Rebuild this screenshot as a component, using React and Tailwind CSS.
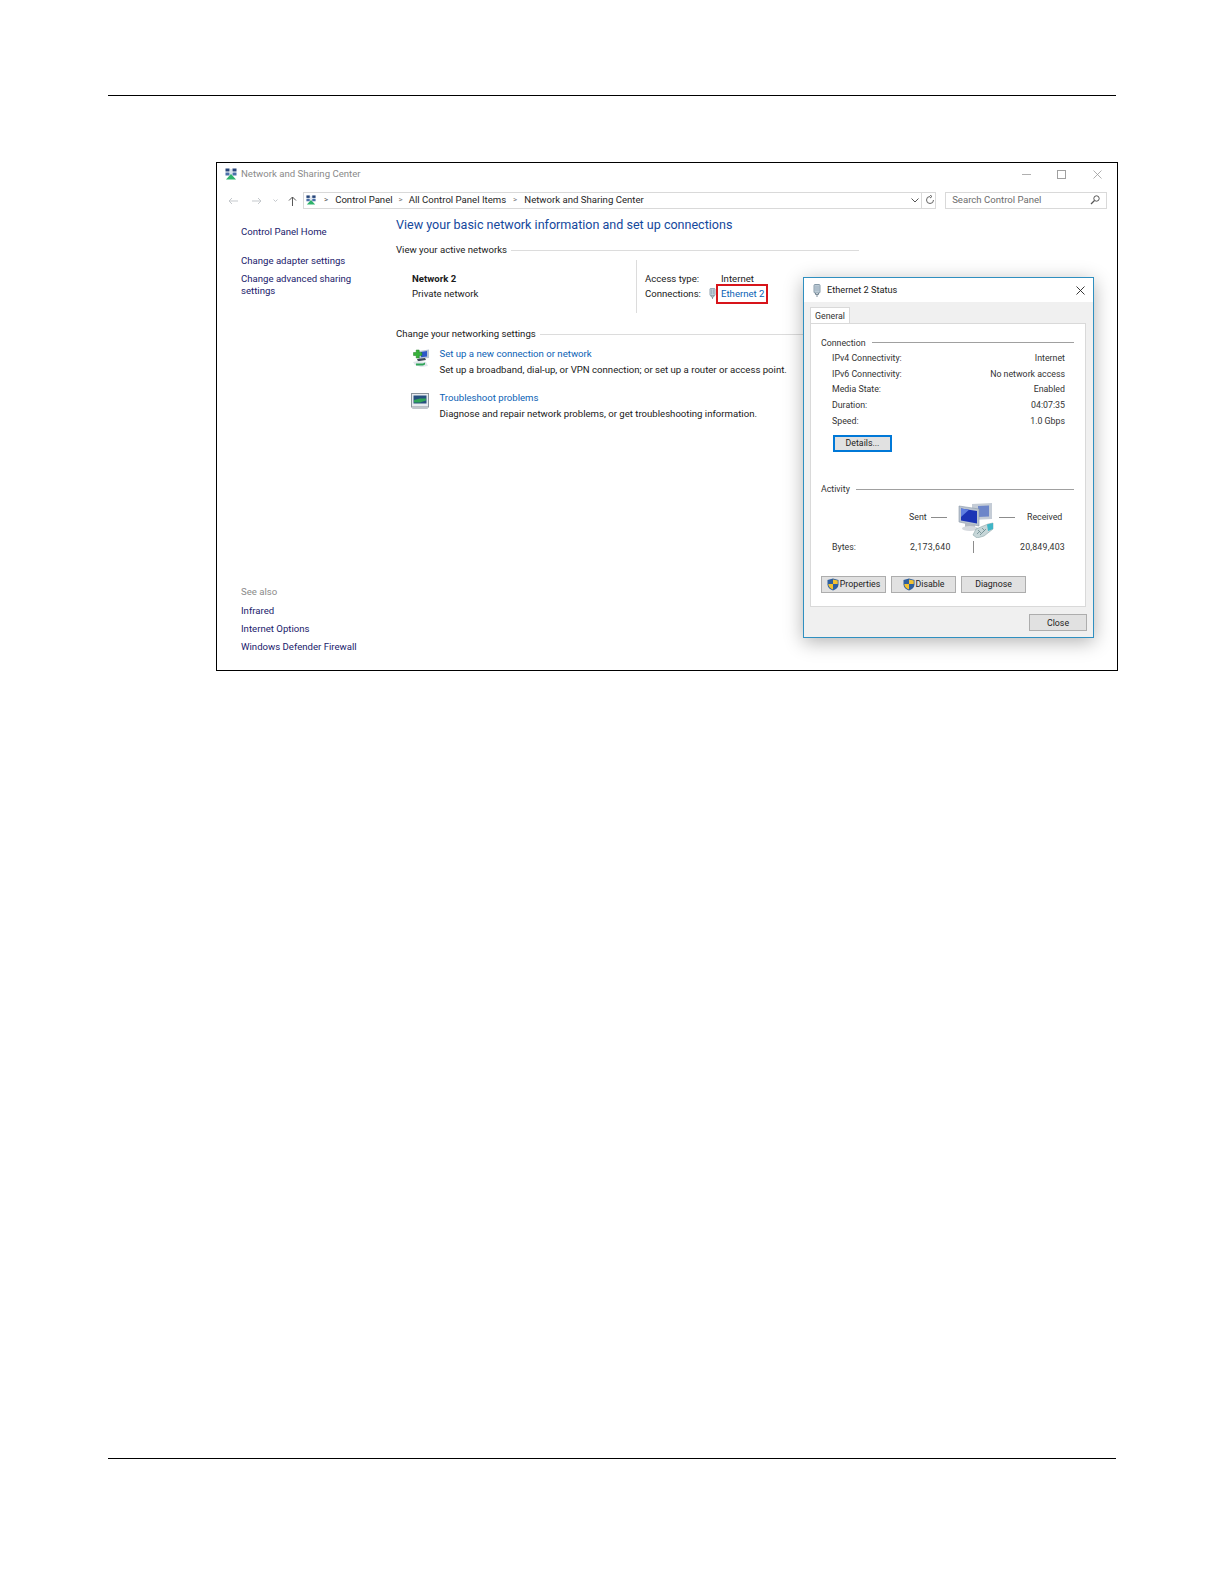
const link = 'text-[#1a1a6b]';
const blue = 'text-[#0b62b5]';

function NetIcon({ className }) {
  return (
    <svg viewBox="0 0 12 12" className={className}>
      <rect x="0.5" y="0.5" width="4" height="3" fill="#27457a" />
      <rect x="7.5" y="0.5" width="4" height="3" fill="#27457a" />
      <rect x="0.5" y="4.5" width="4" height="3" fill="#4a6fa8" />
      <rect x="7.5" y="4.5" width="4" height="3" fill="#4a6fa8" />
      <path d="M6 1v6M2.5 3.5v1M9.5 3.5v1" stroke="#9ab0c8" strokeWidth="0.7" />
      <path d="M6 6l5 5.5H1z" fill="#2eb36b" />
    </svg>
  );
}

function PlugIcon({ className }) {
  return (
    <svg viewBox="0 0 8 13" className={className}>
      <rect x="1" y="0.5" width="6" height="8.5" rx="1" fill="#c9d6e0" stroke="#6f8596" strokeWidth="0.8" />
      <path d="M3 1.500v6M5 1.500v6" stroke="#7d93a3" strokeWidth="0.7" />
      <path d="M2.500 9v1.500h3V9M4 10.500V13" stroke="#5d7283" strokeWidth="0.8" fill="none" />
    </svg>
  );
}

function Shield() {
  return (
    <svg viewBox="0 0 12 13" className="w-[12px] h-[13px] shrink-0">
      <path d="M6 0.5L11.5 2v4.500c0 3-2.500 5-5.500 6-3-1-5.500-3-5.500-6V2z" fill="#2f5f9e" />
      <path d="M6 1.500V6h4.700V2.600zM6 6v5.600c-2.300-.8-4.700-2.600-4.700-5.600z" fill="#f2c230" />
    </svg>
  );
}

function PcsIcon() {
  return (
    <svg viewBox="0 0 37 35" className="w-[37px] h-[35px]">
      <path d="M14 1l20-1v16l-20 1z" fill="#c4ccd6" />
      <path d="M20 3l11-.500v11l-11 .500z" fill="#6d86c9" />
      <path d="M1 3l20 3v17L1 19z" fill="#b9c3cf" stroke="#8b98a8" strokeWidth="0.6" />
      <path d="M3 5.500l16 2.500v12.500L3 17.500z" fill="#1c35b5" />
      <path d="M3 5.500l8 1.200L3 14z" fill="#5f7fe0" />
      <path d="M7 20l10 2v3l-10-1z" fill="#b4bac2" />
      <ellipse cx="12" cy="25.500" rx="8" ry="2.500" fill="#d5d9de" />
      <path d="M15 32l3-6 12-5 5-1v6l-9 7-7 2z" fill="#c6d6d8" stroke="#8ca4a8" strokeWidth="0.6" />
      <path d="M29 21.500l6-1.500v6l-5 2z" fill="#3fb5c7" />
      <path d="M19 31l3-3M22 32l4-4M25 29l3-3M20 27l3 3M24 25l3 3" stroke="#6f8c90" strokeWidth="0.8" />
    </svg>
  );
}

function AddNetIcon() {
  return (
    <svg viewBox="0 0 20 20" className="w-[20px] h-[20px]">
      <path d="M8 3l10-1.500v8.500l-10 1z" fill="#b8c4d4" />
      <path d="M10 4l6-1v5.500l-6 .700z" fill="#2d57c8" />
      <path d="M6 11l8-1 1 2-8 1.200z" fill="#3c4656" />
      <path d="M2.500 4.500h2.700V2h3v2.500h2.700v3H8.200V10h-3V7.500H2.500z" fill="#37b23a" stroke="#1f7d25" strokeWidth="0.5" />
      <path d="M2 14l5-1 8 1 2 4-7 1-6-2z" fill="#dfe5ea" />
      <path d="M5 15.500h7l2-1v2l-2 1H5z" fill="#2fa558" />
    </svg>
  );
}

function TroubleIcon() {
  return (
    <svg viewBox="0 0 18 16" className="w-[18px] h-[16px]">
      <rect x="0.500" y="0.500" width="17" height="13.500" fill="#e8ecf0" stroke="#8a939c" />
      <rect x="2.500" y="2.500" width="13" height="8" fill="#27507f" />
      <path d="M3 7l6-1.500h6v2L9 9.500H3z" fill="#2fa558" />
      <path d="M2 14h14l1 2H1z" fill="#bfc5cb" />
    </svg>
  );
}

function Row({ label, value }) {
  return (
    <div className="h-[15.75px] flex items-center justify-between pl-[21px] pr-[20px] text-[#333]">
      <span>{label}</span>
      <span>{value}</span>
    </div>
  );
}

function Btn({ children, className }) {
  return (
    <div className={`h-[17px] flex items-center justify-center bg-[#e1e1e1] border border-[#adadad] text-[#222] ${className}`}>
      {children}
    </div>
  );
}

function Legend({ title }) {
  return (
    <div className="flex items-center h-[15px] pl-[10px] pr-[11px] text-[#333]">
      <span>{title}</span>
      <div className="flex-1 border-t border-[#a0a0a0] ml-[6px]" />
    </div>
  );
}

function Section({ title }) {
  return (
    <div className="flex items-center h-[16px] w-[463px] text-[#1a1a1a]">
      <span>{title}</span>
      <div className="flex-1 border-t border-[#dcdcdc] ml-[4px]" />
    </div>
  );
}

function StatusDialog() {
  return (
    <div className="absolute left-[586px] top-[114px] w-[291px] h-[361px] border border-[#2f8fc0] bg-[#f0f0f0] shadow-[0_4px_18px_rgba(0,0,0,0.3)] flex flex-col text-[8.8px]">
      <div className="h-[24px] bg-white flex items-center pl-[9px] pr-[8px] text-[#1a1a1a] text-[9.2px]">
        <PlugIcon className="w-[8px] h-[13px]" />
        <span className="ml-[6px] flex-1">Ethernet 2 Status</span>
        <svg viewBox="0 0 9 9" className="w-[9px] h-[9px]">
          <path d="M0.500 0.500l8 8M8.500 0.500l-8 8" stroke="#222" strokeWidth="0.9" />
        </svg>
      </div>
      <div className="mt-[5px] ml-[6px] w-[40px] h-[16px] bg-white border border-b-0 border-[#d9d9d9] flex items-center justify-center text-[#333]">
        General
      </div>
      <div className="ml-[6px] w-[276px] h-[284px] bg-white border border-[#d9d9d9] pt-[11px]">
        <Legend title="Connection" />
        <Row label="IPv4 Connectivity:" value="Internet" />
        <Row label="IPv6 Connectivity:" value="No network access" />
        <Row label="Media State:" value="Enabled" />
        <Row label="Duration:" value="04:07:35" />
        <Row label="Speed:" value="1.0 Gbps" />
        <div className="mt-[6px] ml-[22px] w-[59px] h-[17px] border-2 border-[#0078d7] bg-[#e1e1e1] flex items-center justify-center text-[#222]">
          Details...
        </div>
        <div className="mt-[30px]">
          <Legend title="Activity" />
        </div>
        <div className="mt-[6px] h-[35px] flex pl-[98px] text-[#333]">
          <span className="mt-[6px] h-[16px] leading-[16px] w-[17px]">Sent</span>
          <div className="mt-[14px] ml-[5px] w-[16px] border-t border-[#8c8c8c] h-0" />
          <div className="ml-[11px]">
            <PcsIcon />
          </div>
          <div className="mt-[14px] ml-[4px] w-[16px] border-t border-[#8c8c8c] h-0" />
          <span className="mt-[6px] h-[16px] leading-[16px] ml-[12px]">Received</span>
        </div>
        <div className="mt-[1px] h-[16px] flex items-center pl-[21px] text-[#333]">
          <span className="w-[78px]">Bytes:</span>
          <span className="w-[63px] tracking-[0.3px]">2,173,640</span>
          <div className="w-px h-[12px] bg-[#8c8c8c]" />
          <span className="flex-1 text-right pr-[20px] tracking-[0.2px]">20,849,403</span>
        </div>
        <div className="mt-[21px] pl-[10px] flex gap-[5px]">
          <Btn className="w-[65px] gap-px">
            <Shield />
            Properties
          </Btn>
          <Btn className="w-[65px] gap-px">
            <Shield />
            Disable
          </Btn>
          <Btn className="w-[65px]">Diagnose</Btn>
        </div>
      </div>
      <Btn className="mt-[7px] self-end mr-[6px] w-[58px]">Close</Btn>
    </div>
  );
}

export default function App() {
  return (
    <div className="w-[1224px] h-[1584px] bg-white pt-[95px] pl-[108px] flex flex-col font-['Roboto',sans-serif] text-[9.6px] leading-[16px]">
      <div className="w-[1008px] border-t border-black" />

      <div className="relative mt-[66px] ml-[108px] w-[902px] h-[509px] border border-black flex flex-col">
        <div className="h-[22px] shrink-0 flex items-center pl-[8px] pr-[15px]">
          <NetIcon className="w-[12px] h-[12px]" />
          <span className="ml-[4px] flex-1 text-[#8a8a8a] text-[9.6px]">Network and Sharing Center</span>
          <div className="w-[9px] border-t border-[#b0b0b0]" />
          <div className="ml-[26px] w-[9px] h-[9px] border border-[#a0a0a0]" />
          <svg viewBox="0 0 9 9" className="ml-[27px] w-[9px] h-[9px]">
            <path d="M0.500 0.500l8 8M8.500 0.500l-8 8" stroke="#9a9a9a" strokeWidth="0.8" />
          </svg>
        </div>

        <div className="mt-[7px] h-[17px] shrink-0 flex items-center pl-[11px] pr-[10px] leading-[14px]">
          <svg viewBox="0 0 10 8" className="w-[10px] h-[8px]">
            <path d="M10 4H1M4 1L1 4l3 3" stroke="#c4c8cc" fill="none" />
          </svg>
          <svg viewBox="0 0 10 8" className="ml-[14px] w-[10px] h-[8px]">
            <path d="M0 4h9M6 1l3 3-3 3" stroke="#c4c8cc" fill="none" />
          </svg>
          <svg viewBox="0 0 5 3" className="ml-[11px] w-[5px] h-[3px]">
            <path d="M0.500 0.500l2 2 2-2" stroke="#c4c8cc" fill="none" />
          </svg>
          <svg viewBox="0 0 9 10" className="ml-[10px] w-[9px] h-[10px]">
            <path d="M4.500 10V1M1 4.500l3.500-3.500 3.500 3.500" stroke="#555" fill="none" />
          </svg>
          <div className="ml-[6px] w-[634px] h-[17px] border border-[#d9d9d9] flex items-center pl-[2px] pb-[1px] text-[#1f1f1f]">
            <NetIcon className="w-[10px] h-[12px]" />
            <span className="ml-[8px] text-[#555] text-[8px]">&gt;</span>
            <span className="ml-[7px]">Control Panel</span>
            <span className="ml-[6px] text-[#777] text-[8px]">&gt;</span>
            <span className="ml-[6px]">All Control Panel Items</span>
            <span className="ml-[7px] text-[#777] text-[8px]">&gt;</span>
            <span className="ml-[7px] flex-1">Network and Sharing Center</span>
            <svg viewBox="0 0 8 5" className="w-[8px] h-[5px]">
              <path d="M0.500 0.500L4 4l3.500-3.500" stroke="#555" fill="none" />
            </svg>
            <div className="ml-[2px] w-px h-[15px] bg-[#d9d9d9]" />
            <svg viewBox="0 0 10 10" className="ml-[3px] w-[10px] h-[10px]">
              <path d="M8.500 5A3.500 3.500 0 1 1 5 1.500M5 0l2 1.500L5 3" stroke="#666" fill="none" />
            </svg>
          </div>
          <div className="ml-[9px] w-[162px] h-[17px] border border-[#d9d9d9] flex items-center pl-[6px] pr-[6px] pb-[1px] text-[#6d6d6d]">
            <span className="flex-1">Search Control Panel</span>
            <svg viewBox="0 0 10 10" className="w-[10px] h-[10px]">
              <circle cx="6.500" cy="3.500" r="2.700" stroke="#555" fill="none" />
              <path d="M4.500 5.500L1 9" stroke="#555" strokeWidth="1.300" />
            </svg>
          </div>
        </div>

        <div className="flex-1 flex mt-[6px]">
          <div className={`w-[179px] shrink-0 pl-[24px] pt-[9px] pb-[15px] flex flex-col ${link}`}>
            <span className="h-[16px]">Control Panel Home</span>
            <span className="mt-[13px] h-[16px]">Change adapter settings</span>
            <span className="mt-[4px] leading-[12px] w-[125px]">Change advanced sharing settings</span>
            <span className="mt-auto h-[19px] text-[#8a8a8a]">See also</span>
            <span className="h-[18px]">Infrared</span>
            <span className="h-[18px]">Internet Options</span>
            <span className="h-[16px]">Windows Defender Firewall</span>
          </div>

          <div className="flex-1">
            <h1 className="mt-[1px] h-[18px] leading-[18px] text-[12.55px] text-[#14489c]">
              View your basic network information and set up connections
            </h1>
            <div className="mt-[8px]">
              <Section title="View your active networks" />
            </div>
            <div className="mt-[2px] h-[53px] flex text-[#1a1a1a]">
              <div className="w-[240px] pl-[16px] pt-[11px] leading-[15px]">
                <div className="font-bold">Network 2</div>
                <div>Private network</div>
              </div>
              <div className="border-l border-[#dcdcdc] pl-[8px] pt-[11px] leading-[15px]">
                <div className="flex">
                  <span className="w-[76px]">Access type:</span>
                  <span>Internet</span>
                </div>
                <div className="flex items-center">
                  <span className="w-[64px]">Connections:</span>
                  <PlugIcon className="w-[7px] h-[11px]" />
                  <span className={`relative ml-[5px] ${blue}`}>
                    Ethernet 2
                    <span className="absolute -left-[5px] -right-[3px] -top-[2px] -bottom-[3px] border-2 border-[#d7141a]" />
                  </span>
                </div>
              </div>
            </div>
            <div className="mt-[13px]">
              <Section title="Change your networking settings" />
            </div>
            <div className="mt-[4px] pl-[15px] flex">
              <div className="w-[28.500px] pt-[2px]">
                <AddNetIcon />
              </div>
              <div className="text-[#1a1a1a]">
                <div className={blue}>Set up a new connection or network</div>
                <div>Set up a broadband, dial-up, or VPN connection; or set up a router or access point.</div>
              </div>
            </div>
            <div className="mt-[12px] pl-[15px] flex">
              <div className="w-[28.500px] pt-[3px]">
                <TroubleIcon />
              </div>
              <div className="text-[#1a1a1a]">
                <div className={blue}>Troubleshoot problems</div>
                <div>Diagnose and repair network problems, or get troubleshooting information.</div>
              </div>
            </div>
          </div>
        </div>

        <StatusDialog />
      </div>

      <div className="w-[1008px] mt-[787px] border-t border-black" />
    </div>
  );
}
